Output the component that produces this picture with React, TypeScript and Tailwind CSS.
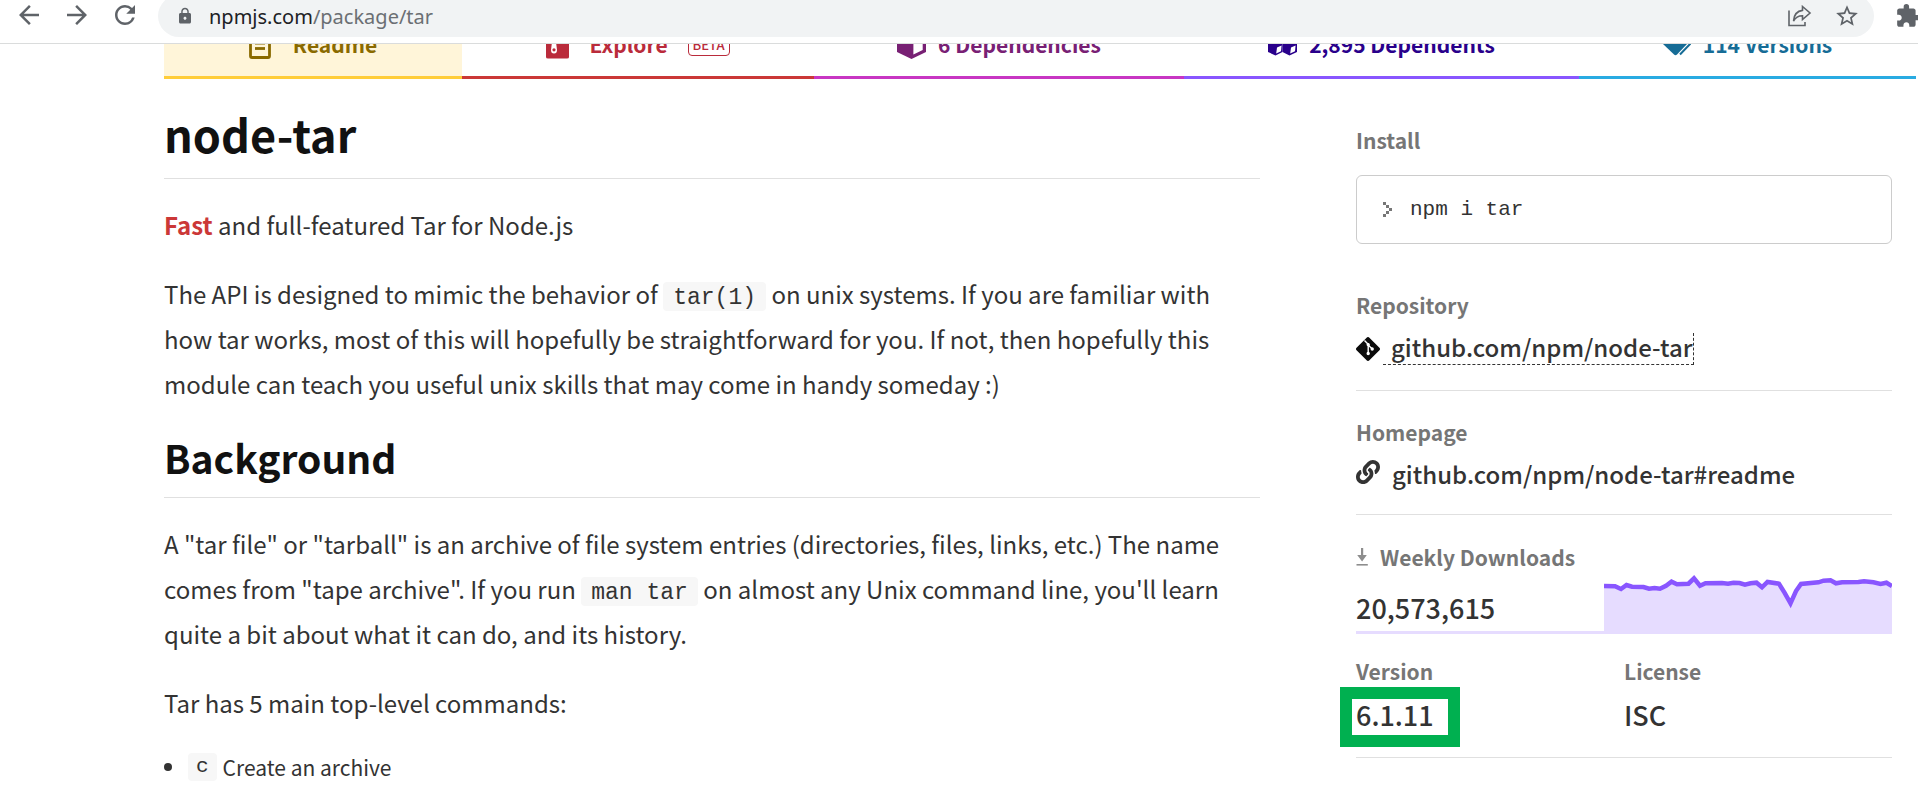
import type { ReactNode } from "react";
import { MdArrowBack, MdArrowForward, MdExtension, MdLock, MdRefresh, MdStarBorder } from "react-icons/md";
import { FaLink } from "react-icons/fa";

function ShareIcon() {
  return (
    <svg width="24" height="22" viewBox="0 0 24 22" fill="none" stroke="#5f6368" strokeWidth="1.6" aria-hidden="true">
      <path d="M1 5.5V20.5H17V17" />
      <path d="M14.5 1.5L22 8L14.5 14.5V10.8C10.5 10.8 7.5 12.3 5.5 16C6 10 9 6 14.5 5.4V1.5Z" />
    </svg>
  );
}

function ReadmeIcon() {
  return (
    <svg width="22" height="30" viewBox="0 0 22 30" fill="none" stroke="currentColor" aria-hidden="true">
      <path d="M3 5.5H14L20.5 11.5V27Q20.5 28.5 19 28.5H3Q1.5 28.5 1.5 27V7Q1.5 5.5 3 5.5Z" strokeWidth="2.8" />
      <path d="M6 14.5H16" strokeWidth="2" />
      <path d="M6 19.5H16" strokeWidth="2.8" />
    </svg>
  );
}

function ExploreIcon() {
  return (
    <svg width="23" height="30" viewBox="0 0 23 30" aria-hidden="true">
      <path d="M2 3H15L23 10V28Q23 29.500 21 29.500H2Q0 29.500 0 28V5Q0 3 2 3Z" fill="currentColor" />
      <path d="M6 13H10L11 21Q11 24.500 8 24.500Q5 24.500 5 21Z" fill="#fff" />
      <circle cx="8" cy="20.800" r="1.600" fill="currentColor" />
    </svg>
  );
}

function CubeIcon() {
  return (
    <svg width="29" height="29" viewBox="0 0 29 29" aria-hidden="true">
      <path d="M14.500 0L29 6.500V22L14.500 29L0 22V6.500Z" fill="currentColor" />
      <path d="M16.400 13.500L25.700 9.500V19.900L16.400 24.400Z" fill="#fff" />
    </svg>
  );
}

function CubesIcon() {
  return (
    <svg width="29" height="26" viewBox="0 0 29 26" aria-hidden="true">
      <g fill="currentColor">
        <path d="M14.500 0L21 3V10L14.500 13L8 10V3Z" />
        <path d="M7.500 7L14.500 10V21L7.500 24.500L0 21V10Z" />
        <path d="M21.500 7L29 10V21L21.500 24.500L14.500 21V10Z" />
      </g>
      <g fill="#fff">
        <path d="M9 16.600L13.600 14.600L13 20.300L8.200 22.500Z" />
        <path d="M23 16.600L27.600 14.600L27 20.300L22.200 22.500Z" />
      </g>
    </svg>
  );
}

function TagsIcon() {
  return (
    <svg width="28" height="24" viewBox="0 0 28 24" aria-hidden="true">
      <path d="M2 0H12L24 12L14 22.500Q12.500 23.800 11 22.500L0 12V2Z" fill="currentColor" />
      <path d="M17 22.500L27 12L16 0" fill="none" stroke="currentColor" strokeWidth="2" />
    </svg>
  );
}

function GitIcon() {
  return (
    <svg width="24" height="24" viewBox="0 0 24 24" aria-hidden="true">
      <rect x="3.100" y="3.100" width="17.800" height="17.800" rx="1.600" transform="rotate(45 12 12)" fill="#0b0b0b" />
      <g stroke="#fff" strokeWidth="1.400" fill="#fff">
        <path d="M8.500 3.500L12.200 7.300V16.500M12.200 8L16 11.800" fill="none" />
        <circle cx="12.200" cy="7.600" r="1" />
        <circle cx="12.200" cy="16.500" r="1" />
        <circle cx="16.200" cy="12" r="1" />
      </g>
    </svg>
  );
}

function DownloadIcon() {
  return (
    <svg width="12" height="18" viewBox="0 0 12 18" fill="#8d8d8d" aria-hidden="true">
      <path d="M5 0H7.200V7H10.800L6.100 13.500L1.200 7H5Z" />
      <path d="M0.500 16H11.800V17.600H0.500Z" />
    </svg>
  );
}

function PromptIcon() {
  return (
    <svg width="10" height="16" viewBox="0 0 10 16" fill="#777" shapeRendering="crispEdges" aria-hidden="true">
      <path d="M0 0H3V3H0ZM3 3H6V6H3ZM6 6H9V9H6ZM3 9H6V12H3ZM0 12H3V15H0Z" />
    </svg>
  );
}

const points: [number, number][] = [
  [0, 12], [11, 12.3], [17, 15], [22.5, 11], [28, 12.7], [39.5, 13], [45, 14.7], [50.5, 14], [56, 14.7],
  [62, 11.7], [67.5, 7.7], [73, 10.3], [84.5, 9.7], [90, 4.3], [96, 11.7], [101.5, 9.3], [118, 9],
  [124, 9.7], [129.5, 8.7], [135.5, 9], [141, 10.7], [146.5, 9.3], [152.5, 8.7], [158, 13.3], [163.5, 8],
  [175, 9.7], [180.5, 18.7], [186.5, 29.3], [192, 17], [197, 10], [214.5, 8.3], [219.5, 6.7],
  [226.5, 6.3], [232, 9.3], [238, 8.3], [254.5, 8], [260, 7.3], [269.5, 8.3], [276.5, 10],
  [282.5, 8.7], [288, 12],
];

function DownloadsChart() {
  const line = points.map(([x, y]) => `${x},${y}`).join(" ");
  return (
    <svg width="288" height="60" viewBox="0 0 288 60" role="img" aria-label="Downloads per week" className="shrink-0">
      <polygon points={`0,60 ${line} 288,60`} fill="#e6dcff" />
      <polyline points={line} fill="none" stroke="#8956ff" strokeWidth="4.5" />
    </svg>
  );
}

type TabProps = { className: string; icon: ReactNode; children: ReactNode };

function Tab({ className, icon, children }: TabProps) {
  return (
    <a href="#" className={`flex h-[67px] items-center justify-center border-b-3 text-[21px] leading-7 font-bold ${className}`}>
      {icon}
      {children}
    </a>
  );
}

function Code({ children }: { children: ReactNode }) {
  return (
    <code className="inline-block h-[29px] rounded-sm bg-[#f7f7f7] px-[10px] pt-0.5 font-['Liberation_Mono',monospace] text-[23px] leading-[29px]">
      {children}
    </code>
  );
}

function Label({ children }: { children: ReactNode }) {
  return <h3 className="flex items-center gap-3 text-[21px] leading-7 font-bold text-[#767676]">{children}</h3>;
}

export default function App() {
  return (
    <div className="h-screen overflow-hidden bg-white font-['Noto_Sans_CJK_SC',sans-serif] text-[#333]">
      <header className="flex h-11 items-start overflow-hidden border-b border-[#dadcdc] text-[#5f6368]">
        <nav className="flex gap-[18px] pl-[14px]" aria-label="Browser">
          <button type="button" aria-label="Back"><MdArrowBack size={30} /></button>
          <button type="button" aria-label="Forward"><MdArrowForward size={30} /></button>
          <button type="button" aria-label="Reload"><MdRefresh size={30} /></button>
        </nav>
        <div className="-mt-[5px] mr-[21px] ml-[18px] flex h-[42px] grow items-center rounded-full bg-[#f1f3f4] pr-[14px] pl-[18px]">
          <MdLock size={18} />
          <div role="textbox" aria-label="Address" className="grow pt-0.5 pl-[15px] font-['Noto_Sans',sans-serif] text-xl leading-7 text-[#6b6f73]">
            <span className="text-[#202124]">npmjs.com</span>/package/tar
          </div>
          <button type="button" aria-label="Share"><ShareIcon /></button>
          <button type="button" aria-label="Bookmark" className="ml-[22px]"><MdStarBorder size={26} /></button>
        </div>
        <button type="button" aria-label="Extensions" className="-mr-[3px] pt-[3px]"><MdExtension size={26} /></button>
      </header>

      <div className="overflow-hidden">
        <nav aria-label="Package" className="-mt-8 ml-[164px] grid grid-cols-[298fr_352fr_370fr_395fr_337fr] pr-0.5">
          <Tab className="gap-[22px] border-[#ffcd3a] bg-[#fff5d9] text-[#8a6a00]" icon={<ReadmeIcon />}>Readme</Tab>
          <Tab className="gap-5 border-[#cb3837] text-[#ba2b3b]" icon={<ExploreIcon />}>
            Explore
            <span className="rounded-sm border border-[#ba2b3b] px-1 text-[13px] leading-[21px] font-medium">BETA</span>
          </Tab>
          <Tab className="gap-3 border-[#c836c3] text-[#782074]" icon={<CubeIcon />}>6 Dependencies</Tab>
          <Tab className="gap-3 border-[#8956ff] text-[#29008b]" icon={<CubesIcon />}>2,895 Dependents</Tab>
          <Tab className="gap-3 border-[#29abe2] text-[#166c96]" icon={<TagsIcon />}>114 Versions</Tab>
        </nav>
      </div>

      <div className="grid grid-cols-[1fr_536px] gap-24 pr-[26px] pl-[164px]">
        <main className="pt-[27px] text-2xl leading-[45px]">
          <h1 className="border-b border-[#e0e0e0] pb-4 text-[45px] leading-14 font-bold text-[#111]">node-tar</h1>
          <p className="mt-[23px]"><strong className="font-bold text-[#cb3837]">Fast</strong> and full-featured Tar for Node.js</p>
          <p className="mt-6">
            The API is designed to mimic the behavior of <Code>tar(1)</Code> on unix systems. If you are familiar with<br />
            how tar works, most of this will hopefully be straightforward for you. If not, then hopefully this<br />
            module can teach you useful unix skills that may come in handy someday :)
          </p>
          <h2 className="mt-[27px] border-b border-[#e0e0e0] pb-4 text-[39px] leading-12 font-bold text-[#111]">Background</h2>
          <p className="mt-[23px]">
            A "tar file" or "tarball" is an archive of file system entries (directories, files, links, etc.) The name<br />
            comes from "tape archive". If you run <Code>man tar</Code> on almost any Unix command line, you'll learn<br />
            quite a bit about what it can do, and its history.
          </p>
          <p className="mt-6">Tar has 5 main top-level commands:</p>
          <ul className="mt-6 text-[21px] leading-9">
            <li className="flex items-center">
              <span className="mr-4 size-2 rounded-full bg-[#333]" />
              <code className="mr-1.5 h-7 rounded-sm bg-[#f7f7f7] px-2 font-['Liberation_Mono',monospace] text-[21px] leading-7">c</code>
              Create an archive
            </li>
          </ul>
        </main>

        <aside className="pt-[47px]">
          <Label>Install</Label>
          <button type="button" className="mt-[21px] flex h-[69px] w-full items-center gap-[17px] rounded-md border border-[#ccc] px-[26px]">
            <PromptIcon />
            <code className="font-['Liberation_Mono',monospace] text-[21px] leading-8">npm i tar</code>
          </button>

          <section className="mt-[47px] border-b border-[#e0e0e0] pb-[25px]">
            <Label>Repository</Label>
            <div className="mt-[14px] flex items-center gap-[3px]">
              <GitIcon />
              <a href="#" className="border-r border-b border-dashed border-[#333] pb-[3px] pl-2 text-2xl leading-7 font-medium">github.com/npm/node-tar</a>
            </div>
          </section>

          <section className="border-b border-[#e0e0e0] pt-[27px] pb-[26px]">
            <Label>Homepage</Label>
            <a href="#" className="mt-[14px] flex gap-3 text-2xl leading-7 font-medium">
              <FaLink size={24} />
              github.com/npm/node-tar#readme
            </a>
          </section>

          <section className="pt-7">
            <Label><DownloadIcon />Weekly Downloads</Label>
            <div className="mt-[3px] flex items-end">
              <p className="grow border-b-3 border-[#e6dcff] pb-[5px] text-[27px] leading-9 font-medium">20,573,615</p>
              <DownloadsChart />
            </div>
          </section>

          <div className="grid grid-cols-2 border-b border-[#e0e0e0] pt-[23px] pb-6 text-[27px] leading-9 font-medium">
            <section>
              <Label>Version</Label>
              <p className="relative mt-3">
                6.1.11
                <span className="absolute -top-[10px] -left-4 h-[60px] w-[120px] border-12 border-[#00b050]" />
              </p>
            </section>
            <section>
              <Label>License</Label>
              <p className="mt-3">ISC</p>
            </section>
          </div>
        </aside>
      </div>
    </div>
  );
}
